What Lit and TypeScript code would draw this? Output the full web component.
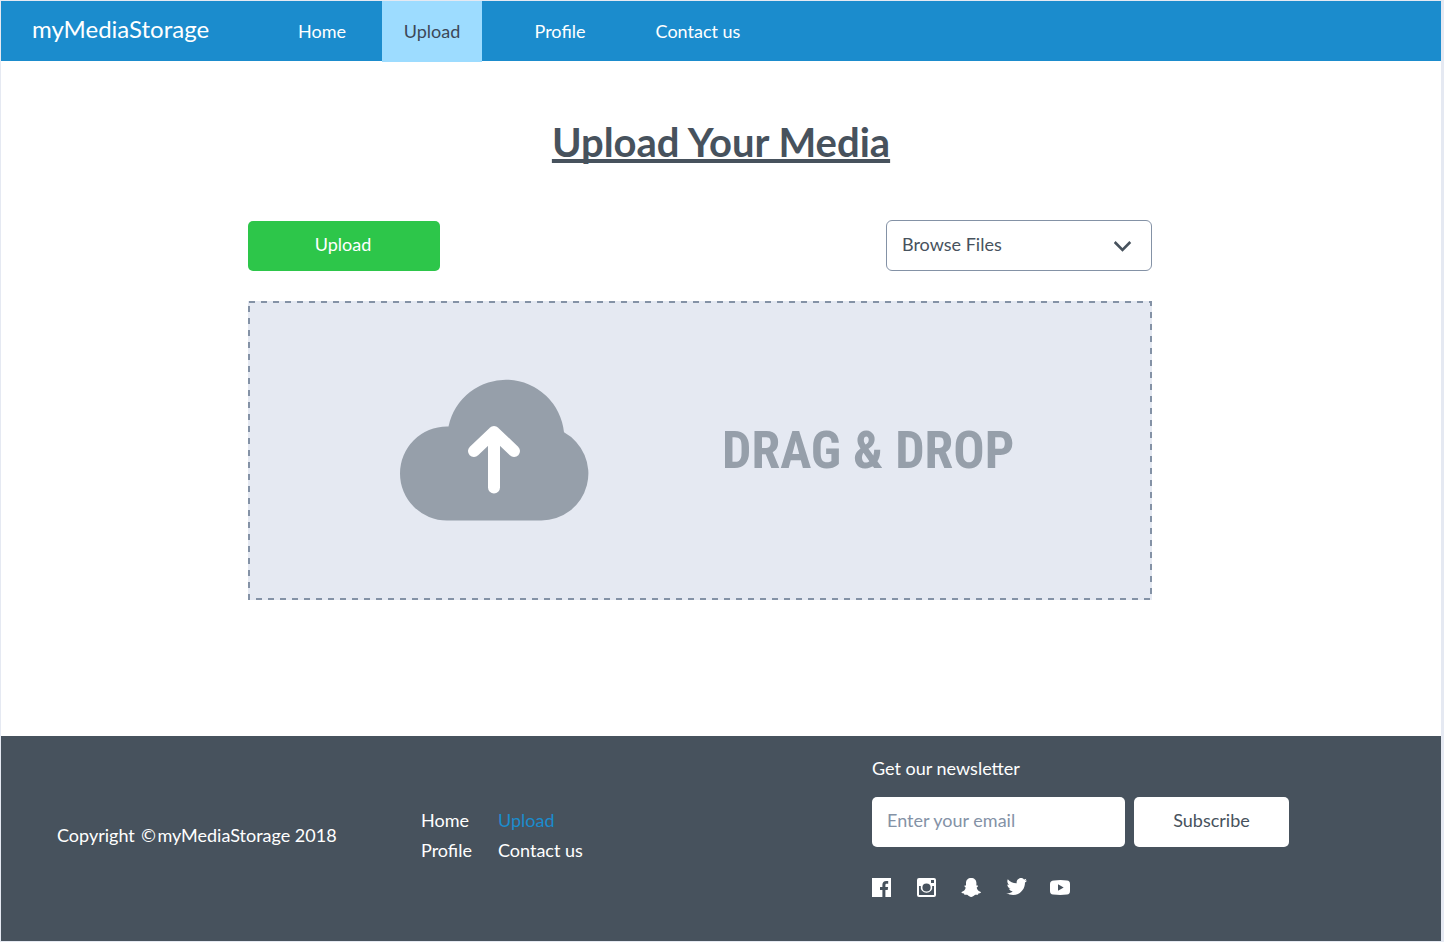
import { LitElement, html, css, svg } from "lit";
import { customElement, property } from "lit/decorators.js";
import { classMap } from "lit/directives/class-map.js";

interface NavItem {
  label: string;
  href: string;
}

const NAV_ITEMS: NavItem[] = [
  { label: "Home", href: "#home" },
  { label: "Upload", href: "#upload" },
  { label: "Profile", href: "#profile" },
  { label: "Contact us", href: "#contact" },
];

const SOCIAL_ITEMS = [
  {
    name: "Facebook",
    shape: svg`<path fill-rule="evenodd" d="M0 0H19V19H13.4V12H15.7L16.1 9H13.4V7.2C13.4 6.2 13.8 5.8 14.8 5.8H16.2V3.1C15.7 3 15 3 14.2 3C11.8 3 10.4 4.4 10.4 6.8V9H8V12H10.4V19H0Z"/>`,
  },
  {
    name: "Instagram",
    shape: svg`<path fill-rule="evenodd" d="M2 0H17A2 2 0 0 1 19 2V17A2 2 0 0 1 17 19H2A2 2 0 0 1 0 17V2A2 2 0 0 1 2 0ZM14 2V5H17V2ZM2 8V17H17V8H15.2A5.8 5.8 0 1 1 3.8 8ZM9.5 5.4A4.1 4.1 0 1 0 9.5 13.6A4.1 4.1 0 1 0 9.5 5.4Z"/>`,
  },
  {
    name: "Snapchat",
    shape: svg`<path d="M9.1 0C12.4 0 14.4 2 14.4 5V7.4C15 7.6 15.800 7.100 16 7.900C16.100 8.700 14.600 9 14.700 9.800C15.300 11.800 16.600 13.400 18.800 14C19.400 14.400 18.800 15.100 16.400 15.500L16 16.800C14.800 17 13.800 16.500 12.800 17C11.600 17.800 10.600 19 9.100 19C7.800 19 6.800 17.800 5.600 17C4.600 16.500 3.600 17 2.400 16.800L2 15.500C-.4 15.100-1 14.400-.4 14C1.800 13.400 3.100 11.800 3.700 9.800C3.800 9 2.300 8.700 2.400 7.900C2.600 7.100 3.400 7.600 4 7.400V5C4 2 6 0 9.100 0Z"/>`,
  },
  {
    name: "Twitter",
    shape: svg`<path d="M20 2.500C19.300 2.800 18.600 3 17.800 3.100C18.600 2.600 19.100 1.900 19.200 .8C18.400 1.200 17.800 1.400 17 1.400C15.800 .2 14 -.2 12.200 .4C10.200 1.200 9.300 3.200 9.700 5.300C6.200 5.400 3.100 3.800 .8 1.200C-.2 3.200 .4 5.500 2.200 6.900C1.500 6.900 .8 6.700 .3 6.400C.4 8.400 1.700 10 3.600 10.600C3 10.700 2.400 10.700 1.800 10.600C2.400 12.200 3.900 13.300 5.700 13.400C4 14.800 1.800 15.400-.6 15.100C1.400 16.400 3.700 17 6.100 17C13.500 17 18 11 18 4.600C18.800 4.100 19.500 3.300 20 2.500Z"/>`,
  },
  {
    name: "YouTube",
    shape: svg`<path fill-rule="evenodd" d="M2 2.4Q8.500 1.600 15 2.400Q18 2.500 18 6V13Q18 16.300 15 16.600Q8.500 17.400 1 16.600Q-2 16.300-2 13V6Q-2 2.500 2 2.400ZM6 6.200V12.800L11.700 9.500Z"/>`,
  },
];

@customElement("site-header")
export class SiteHeader extends LitElement {
  @property() current = "";

  static styles = css`
    :host {
      display: block;
      background: #1b8ccd;
    }
    .bar {
      display: grid;
      grid-template-columns: 261px 1fr;
      height: 60px;
    }
    .brand {
      padding-left: 31px;
      font-size: 24px;
      line-height: 56px;
      color: #fff;
      text-decoration: none;
    }
    .links {
      display: grid;
      grid-template-columns: 120px 100px 156px 120px;
    }
    .link {
      height: 61px;
      font-size: 18px;
      line-height: 61px;
      text-align: center;
      color: #fff;
      text-decoration: none;
    }
    .active {
      background: #9ddcff;
      color: #3c4858;
    }
  `;

  render() {
    return html`
      <header class="bar">
        <a class="brand" href="#home">myMediaStorage</a>
        <nav class="links" aria-label="Main">
          ${NAV_ITEMS.map(
            (item) => html`<a
              class=${classMap({ link: true, active: item.label === this.current })}
              href=${item.href}
              >${item.label}</a
            >`
          )}
        </nav>
      </header>
    `;
  }
}

@customElement("upload-panel")
export class UploadPanel extends LitElement {
  static styles = css`
    :host {
      display: block;
    }
    .title {
      margin: 0;
      padding-top: 56px;
      font-size: 40px;
      line-height: 50px;
      font-weight: 700;
      text-align: center;
      text-decoration: underline;
      text-decoration-thickness: 4px;
      text-underline-offset: 2px;
      text-decoration-skip-ink: none;
    }
    .body {
      display: grid;
      grid-template-columns: 247fr 904fr 289fr;
      padding: 53px 0 48px;
    }
    .content {
      grid-column: 2;
    }
    .actions {
      display: flex;
      justify-content: space-between;
      align-items: flex-end;
    }
    .upload {
      width: 192px;
      height: 50px;
      padding: 0 2px 4px 0;
      border: 0;
      border-radius: 5px;
      background: #2dc64a;
      color: #fff;
      font: inherit;
      font-size: 18px;
    }
    .browse {
      display: grid;
      align-items: center;
      width: 266px;
    }
    .select,
    .chevron {
      grid-area: 1 / 1;
    }
    .select {
      appearance: none;
      width: 100%;
      height: 51px;
      padding: 0 48px 3px 15px;
      border: 1px solid #8492a6;
      border-radius: 6px;
      background: #fff;
      color: #47525d;
      font: inherit;
      font-size: 18px;
    }
    .chevron {
      justify-self: end;
      margin-right: 20px;
      pointer-events: none;
    }
    .drop {
      --dash: #8492a6 0 6px, transparent 6px 12px;
      display: grid;
      grid-template-columns: 492fr 412fr;
      align-items: center;
      height: 299px;
      margin-top: 30px;
      background:
        repeating-linear-gradient(90deg, var(--dash)) 1px 0 / 300px 2px repeat-x,
        repeating-linear-gradient(90deg, var(--dash)) 8px 100% / 300px 2px repeat-x,
        repeating-linear-gradient(180deg, var(--dash)) 0 5px / 2px 300px repeat-y,
        repeating-linear-gradient(180deg, var(--dash)) 100% 11px / 2px 300px repeat-y,
        #e5e9f2;
      color: #969faa;
    }
    .cloud {
      justify-self: center;
      overflow: visible;
    }
    .drop-text {
      margin: 0 0 0 -18px;
      font-family: "Roboto Condensed", "Liberation Sans Narrow", "Liberation Sans", sans-serif;
      font-size: 52px;
      font-weight: 700;
      line-height: 60px;
      white-space: nowrap;
    }
  `;

  render() {
    return html`
      <h1 class="title">Upload Your Media</h1>
      <div class="body">
        <div class="content">
          <div class="actions">
            <button class="upload" type="button">Upload</button>
            <div class="browse">
              <select class="select" aria-label="Browse Files">
                <option>Browse Files</option>
              </select>
              <svg class="chevron" width="18" height="12" viewBox="0 0 18 12" aria-hidden="true">
                <path d="M.7 2L8.500 9.800L16.300 2" fill="none" stroke="#47525d" stroke-width="2.600" />
              </svg>
            </div>
          </div>
          <section class="drop" aria-label="Drop area">
            <svg class="cloud" width="188" height="144" viewBox="0 0 188 144" aria-hidden="true">
              <path
                fill="currentColor"
                d="M47 141.500A47 47 0 0 1 47 47.500H48.500A58.500 58.500 0 0 1 164 53.300A47 47 0 0 1 141 141.500Z"
              />
              <path
                d="M94 53V108.500M74 72L94 53L114 72"
                fill="none"
                stroke="#fff"
                stroke-width="12"
                stroke-linecap="round"
                stroke-linejoin="round"
              />
            </svg>
            <p class="drop-text">DRAG &amp; DROP</p>
          </section>
        </div>
      </div>
    `;
  }
}

@customElement("site-footer")
export class SiteFooter extends LitElement {
  @property() current = "";

  static styles = css`
    :host {
      display: block;
      background: #47525d;
      color: #fff;
      font-size: 18px;
      line-height: 30px;
    }
    .bar {
      display: grid;
      grid-template-columns: 364fr 451fr 569fr;
      padding: 17px 0 43px 56px;
    }
    .copyright {
      margin: 0;
      padding-top: 67px;
    }
    .mark {
      font-family: "DejaVu Sans", sans-serif;
      line-height: 20px;
    }
    .links {
      display: grid;
      grid-template-columns: 77px max-content;
      align-content: start;
      padding-top: 52px;
    }
    .link {
      color: inherit;
      text-decoration: none;
    }
    .active {
      color: #1b8ccd;
    }
    .label {
      display: block;
    }
    .form {
      display: flex;
      gap: 9px;
      padding: 14px 0 31px;
    }
    .email,
    .subscribe {
      box-sizing: border-box;
      height: 50px;
      border: 0;
      border-radius: 5px;
      background: #fff;
      color: #47525d;
      font: inherit;
      line-height: 24px;
    }
    .email {
      width: 253px;
      padding: 0 15px 4px;
    }
    .email::placeholder {
      color: #8492a6;
      opacity: 1;
    }
    .subscribe {
      width: 155px;
      padding: 0 0 4px;
    }
    .social {
      display: flex;
      gap: 25px;
    }
    .social-link {
      display: block;
      height: 20px;
      color: inherit;
    }
    .icon {
      display: block;
      overflow: visible;
      fill: currentColor;
    }
  `;

  render() {
    return html`
      <footer class="bar">
        <p class="copyright">Copyright <span class="mark">©</span>myMediaStorage 2018</p>
        <nav class="links" aria-label="Footer">
          ${NAV_ITEMS.map(
            (item) => html`<a
              class=${classMap({ link: true, active: item.label === this.current })}
              href=${item.href}
              >${item.label}</a
            >`
          )}
        </nav>
        <div>
          <label class="label" for="email">Get our newsletter</label>
          <form class="form">
            <input class="email" id="email" type="email" placeholder="Enter your email" />
            <button class="subscribe" type="button">Subscribe</button>
          </form>
          <div class="social">
            ${SOCIAL_ITEMS.map(
              (item) => html`<a class="social-link" href="#" aria-label=${item.name}>
                <svg class="icon" width="20" height="20" viewBox="0 0 20 20" aria-hidden="true">
                  ${item.shape}
                </svg>
              </a>`
            )}
          </div>
        </div>
      </footer>
    `;
  }
}

@customElement("app-root")
export class AppRoot extends LitElement {
  static styles = css`
    :host {
      display: block;
      box-sizing: border-box;
      min-height: 100vh;
      padding: 1px 3px 1px 1px;
      background: #e5e9f2;
      color: #47525d;
      font-family: Lato, "Open Sans", sans-serif;
    }
    .page {
      display: flex;
      flex-direction: column;
      min-height: calc(100vh - 2px);
      background: #fff;
    }
    .main {
      flex: 1;
    }
  `;

  render() {
    return html`
      <div class="page">
        <site-header current="Upload"></site-header>
        <main class="main"><upload-panel></upload-panel></main>
        <site-footer current="Upload"></site-footer>
      </div>
    `;
  }
}
